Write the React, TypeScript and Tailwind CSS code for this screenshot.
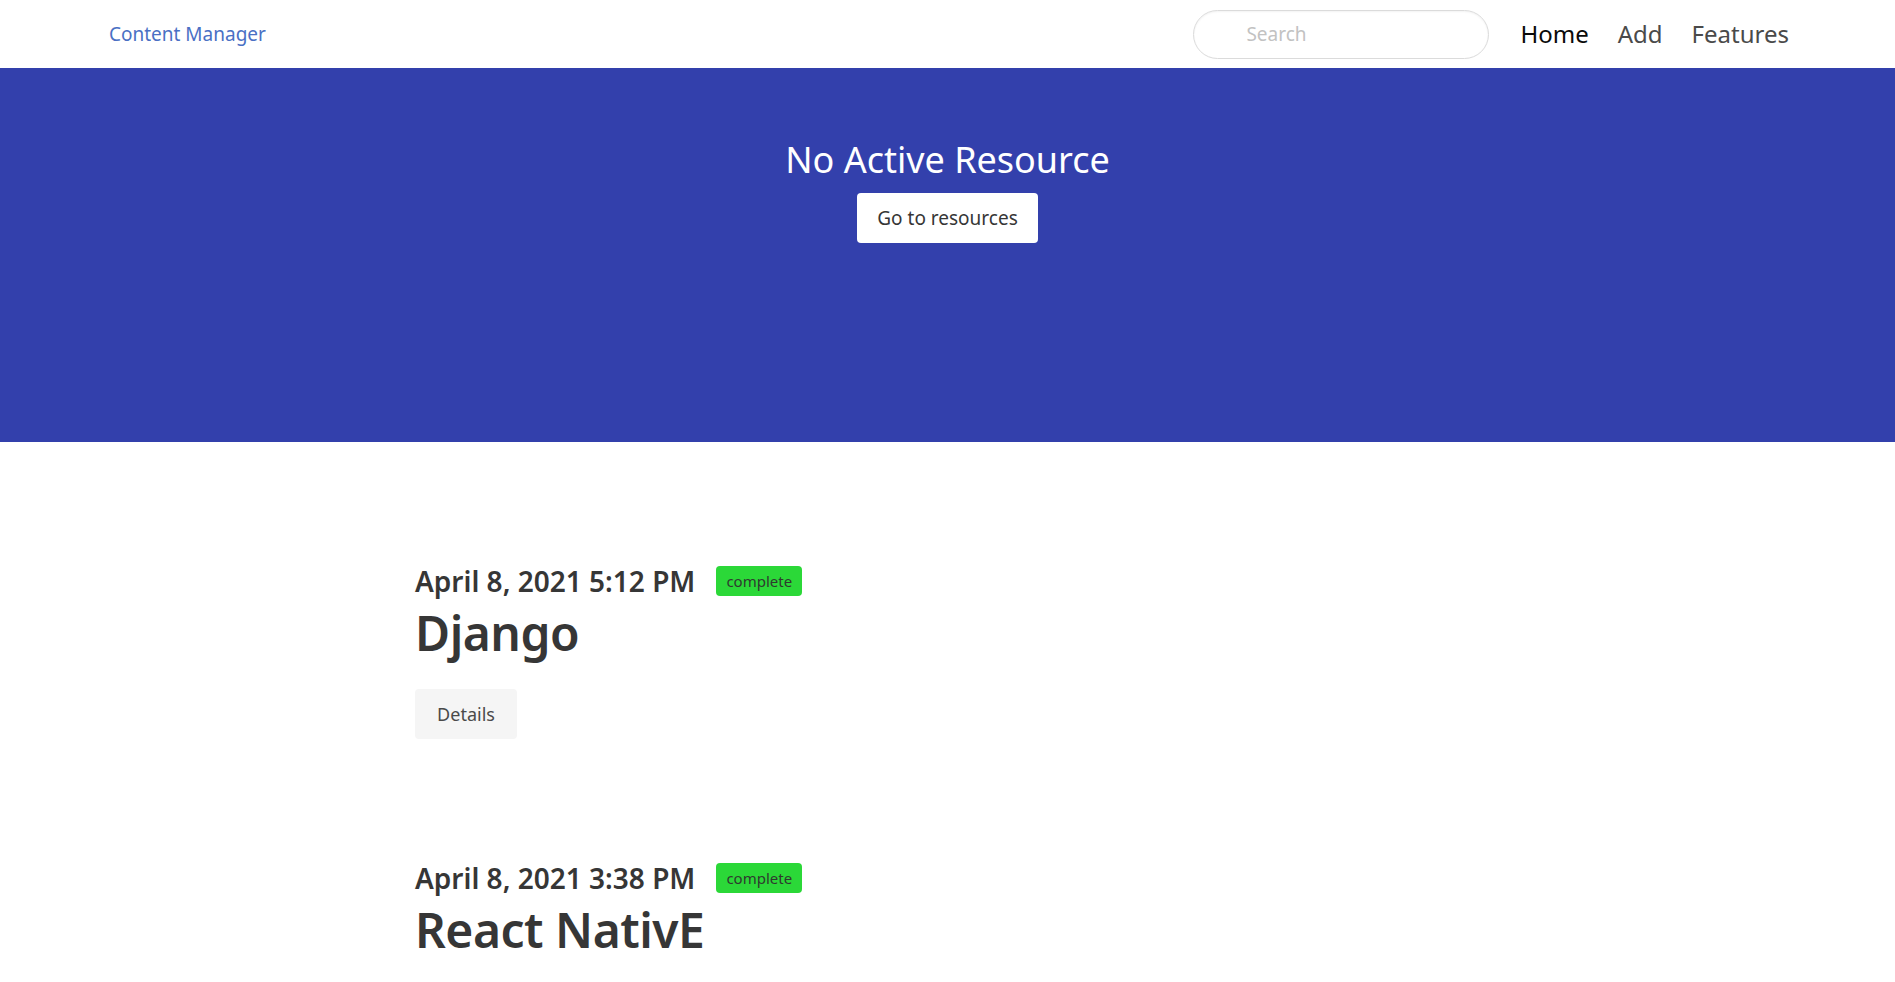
import React from "react";

const font = { fontFamily: '"Noto Sans", "Open Sans", sans-serif' };

function Item({ date, title, details }: { date: string; title: string; details?: boolean }) {
  return (
    <div className="flex flex-col items-start">
      <div className="flex items-center h-[36px]">
        <span className="text-[28px] font-semibold text-[#363636] leading-none">{date}</span>
        <span className="ml-[21px] h-[30px] px-[10px] rounded-[4px] bg-[#2bd838] text-[#2f3a2f] text-[15px] flex items-center">complete</span>
      </div>
      <div className="mt-[4px] h-[60px] flex items-center text-[48px] font-semibold text-[#363636] leading-none tracking-[-0.5px]">{title}</div>
      {details && (
        <button className="mt-[26px] h-[50px] w-[102px] rounded-[4px] bg-[#f5f5f5] text-[18px] text-[#4a4a4a]">Details</button>
      )}
    </div>
  );
}

export default function App() {
  return (
    <div style={font} className="min-h-screen bg-white">
      <header className="h-[68px] flex items-center">
        <div className="pl-[109px] text-[19px] text-[#4a70c4]">Content Manager</div>
        <div className="ml-auto flex items-center pr-[106px]">
          <div className="w-[296px] h-[49px] rounded-full border border-[#dbdbdb] flex items-center pl-[52px] shadow-[inset_0_1px_2px_rgba(10,10,10,0.05)]">
            <span className="text-[19px] text-[#c2c2c2]">Search</span>
          </div>
          <nav className="ml-[31px] flex items-center gap-[29px] text-[24px]">
            <span className="text-[#0a0a0a]">Home</span>
            <span className="text-[#4a4a4a]">Add</span>
            <span className="text-[#4a4a4a]">Features</span>
          </nav>
        </div>
      </header>
      <section className="h-[374px] bg-[#3340ac] flex flex-col items-center pt-[72px]">
        <h1 className="text-[36px] leading-[40px] text-white">No Active Resource</h1>
        <button className="mt-[13px] h-[50px] w-[181px] rounded-[4px] bg-white text-[19px] text-[#363636]">Go to resources</button>
      </section>
      <main className="pl-[415px] pt-[121px] flex flex-col gap-[121px]">
        <Item date="April 8, 2021 5:12 PM" title="Django" details />
        <Item date="April 8, 2021 3:38 PM" title="React NativE" />
      </main>
    </div>
  );
}
